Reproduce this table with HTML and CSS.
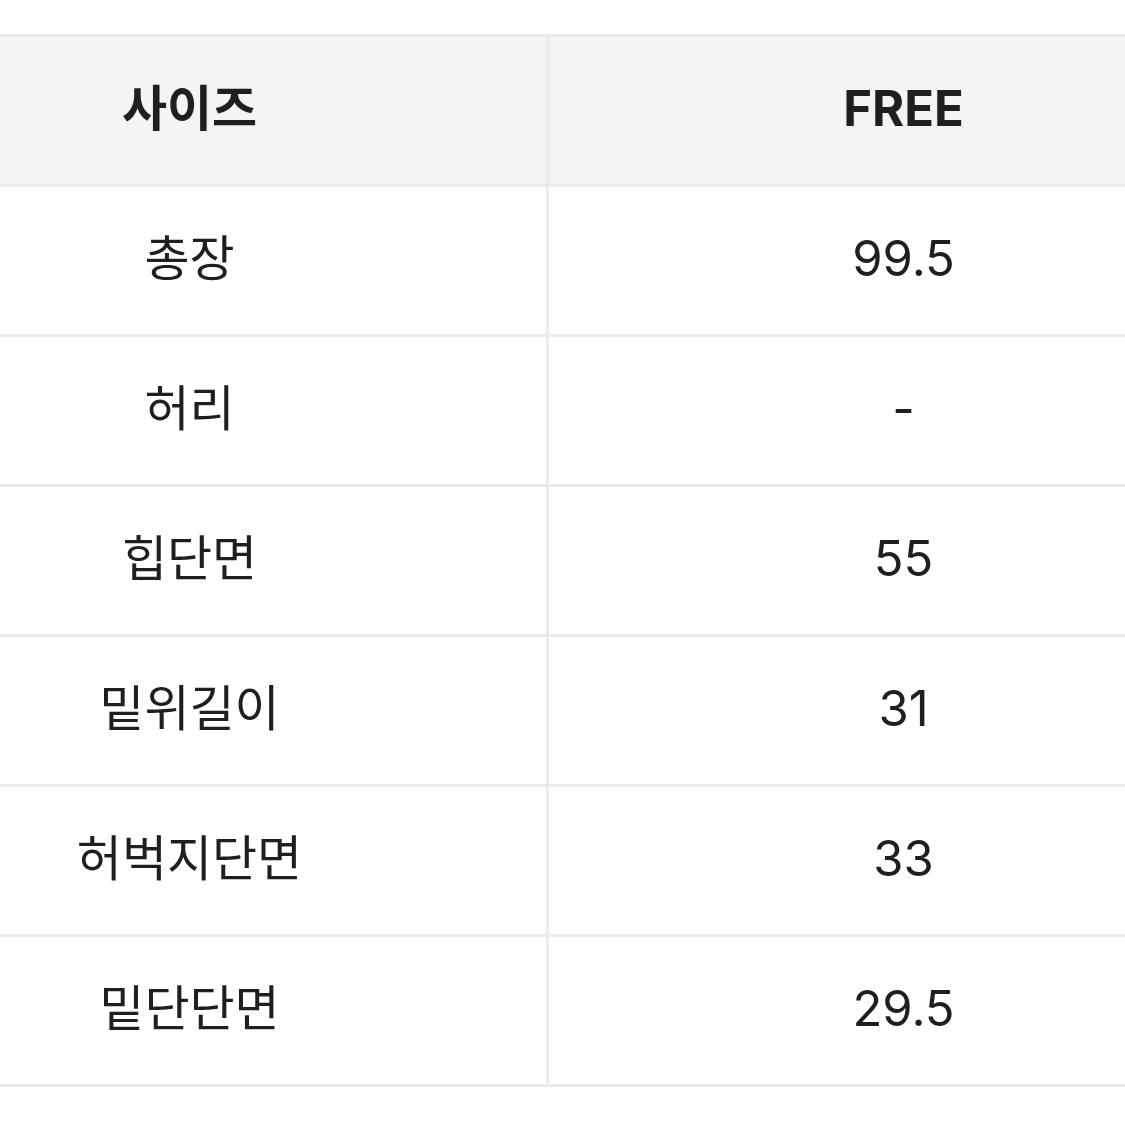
FILE: index.html
```html
<!DOCTYPE html>
<html lang="ko">
<head>
<meta charset="utf-8">
<link rel="stylesheet" href="styles.css">
</head>
<body>
<div class="wrap">
<table class="size-table">
  <thead>
    <tr><th class="label">사이즈</th><th class="value">FREE</th></tr>
  </thead>
  <tbody>
    <tr><td class="label">총장</td><td class="value">99.5</td></tr>
    <tr><td class="label">허리</td><td class="value">-</td></tr>
    <tr><td class="label">힙단면</td><td class="value">55</td></tr>
    <tr><td class="label">밑위길이</td><td class="value">31</td></tr>
    <tr><td class="label">허벅지단면</td><td class="value">33</td></tr>
    <tr><td class="label">밑단단면</td><td class="value">29.5</td></tr>
  </tbody>
</table>
</div>
</body>
</html>
```

FILE: styles.css
```css
html, body {
  margin: 0;
  padding: 0;
  background: #ffffff;
}
body {
  width: 1125px;
  height: 1125px;
  overflow: hidden;
  font-family: Inter, "Noto Sans CJK KR", "Noto Sans", sans-serif;
  color: #1f1f1f;
}
.wrap {
  padding-top: 34px;
  margin-left: -167px;
}
.size-table {
  border-collapse: separate;
  border-spacing: 0;
  width: 1425px;
  table-layout: fixed;
  border-top: 3px solid #ebebeb;
}
.size-table th,
.size-table td {
  height: 143px;
  padding: 0 0 4px 0;
  text-align: center;
  vertical-align: middle;
  border-bottom: 3px solid #ebebeb;
  font-size: 49px;
  line-height: 1;
}
.size-table th {
  background: #f4f4f4;
  font-weight: 700;
}
.size-table td {
  font-weight: 400;
}
.size-table .label {
  width: 713px;
  border-right: 3px solid #ebebeb;
}
.size-table .value {
  width: auto;
}
```
